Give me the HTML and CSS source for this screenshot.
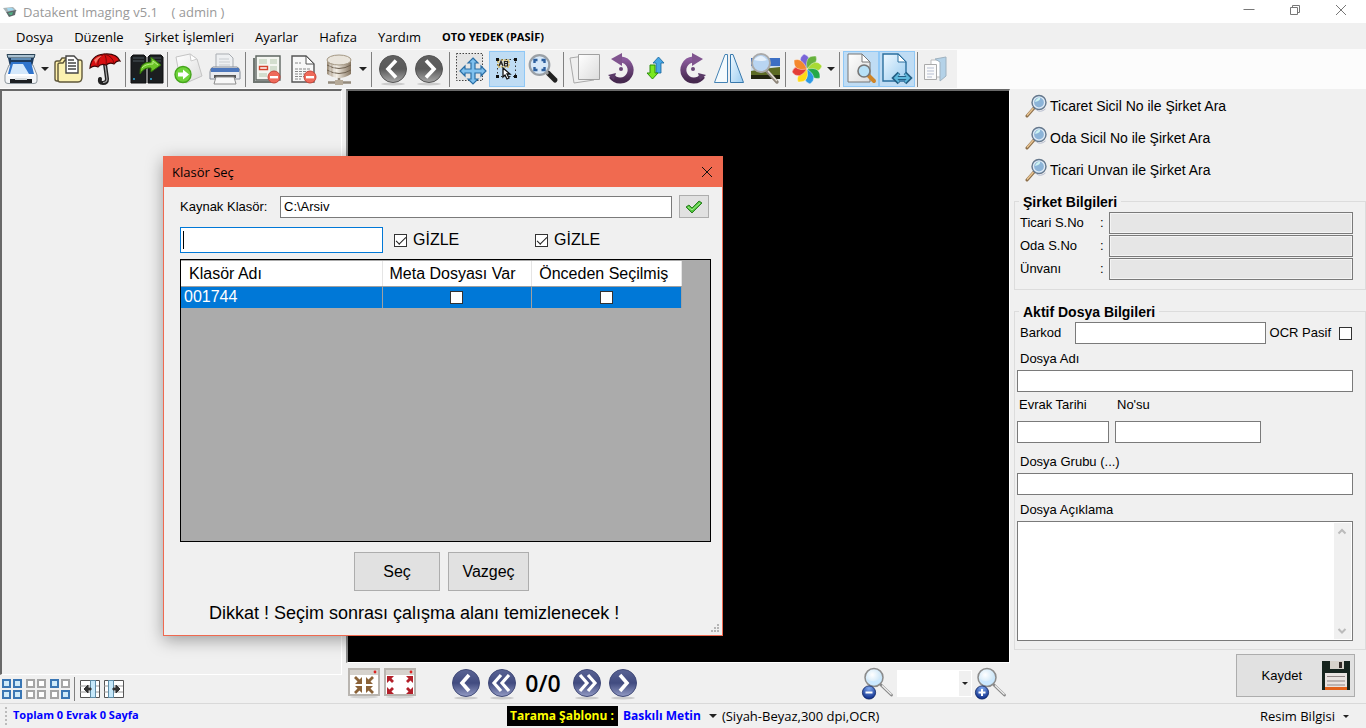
FILE: index.html
```
<!DOCTYPE html>
<html lang="tr">
<head>
  <meta charset="UTF-8" />
  <meta name="viewport" content="width=device-width, initial-scale=1.0"/>
  <title>Datakent Imaging v5.1</title>
  <link rel="stylesheet" href="styles.css">
</head>
<body>
  <!-- shared gradients and symbols -->
  <svg class="defs" width="0" height="0">
    <defs>
      <linearGradient id="gGray" x1="0" y1="0" x2="0" y2="1"><stop offset="0" stop-color="#606060"/><stop offset=".5" stop-color="#5a5a5a"/><stop offset="1" stop-color="#a8a8a8"/></linearGradient>
      <linearGradient id="gNavy" x1="0" y1="0" x2="0" y2="1"><stop offset="0" stop-color="#5a6494"/><stop offset=".5" stop-color="#414b80"/><stop offset="1" stop-color="#939bc4"/></linearGradient>
      <linearGradient id="gPaper" x1="0" y1="0" x2="1" y2="1"><stop offset="0" stop-color="#ffffff"/><stop offset="1" stop-color="#dcdcdc"/></linearGradient>
      <linearGradient id="gBlue" x1="0" y1="0" x2="1" y2="1"><stop offset="0" stop-color="#f0f9ff"/><stop offset="1" stop-color="#9accf0"/></linearGradient>
      <linearGradient id="gPurple" x1="0" y1="0" x2="0" y2="1"><stop offset="0" stop-color="#8a5a9c"/><stop offset="1" stop-color="#46294f"/></linearGradient>
      <linearGradient id="gDb" x1="0" y1="0" x2="1" y2="0"><stop offset="0" stop-color="#9b8c78"/><stop offset=".4" stop-color="#f4efe6"/><stop offset="1" stop-color="#85745f"/></linearGradient>
      <radialGradient id="gLens" cx=".4" cy=".35" r=".7"><stop offset="0" stop-color="#ffffff"/><stop offset="1" stop-color="#b8dcf4"/></radialGradient>
      <radialGradient id="gBall" cx=".5" cy=".2" r=".8"><stop offset="0" stop-color="#7fa8ee"/><stop offset="1" stop-color="#0a2a88"/></radialGradient>
    </defs>
    <symbol id="minus-badge" viewBox="0 0 14 14"><circle cx="7" cy="7" r="6" fill="#ee6a5a" stroke="#c8453a"/><rect x="3" y="6" width="8" height="2.4" fill="#fff"/></symbol>
    <symbol id="search" viewBox="0 0 24 24">
      <path d="M3 22 10 14" stroke="#8d6f4a" stroke-width="3" stroke-linecap="round"/><path d="M3 21.500 9.500 14" stroke="#e9c593" stroke-width="1.400"/>
      <circle cx="15" cy="8.500" r="7" fill="#a9c8e4" stroke="#66788c" stroke-width="1.400"/><circle cx="15" cy="8.500" r="5.500" fill="#8cb4d8" stroke="#e4edf6" stroke-width="1.200"/><path d="M11 8q1-4 5-4.500q1 3-5 4.500" fill="#cdf3f2"/><path d="M21.500 15q-5 4-9 1" stroke="#b9bfd0" fill="none"/>
    </symbol>
    <symbol id="zoom" viewBox="0 0 34 34">
      <path d="M20 19 30.500 29" stroke="#888" stroke-width="2.800" stroke-linecap="round"/><path d="M21 19.500 30.500 28.500" stroke="#eee" stroke-width="1.300"/>
      <circle cx="13" cy="11.500" r="9" fill="url(#gLens)" stroke="#8b8b8b" stroke-width="1.500"/><path d="M5.500 13q7.500 5 15-1q-2 7-7.500 7t-7.500-6" fill="#cbe8ff"/>
      <circle cx="8" cy="26.500" r="6.600" fill="url(#gBall)" stroke="#0a2260" stroke-width=".8"/>
    </symbol>
  </svg>

  <div class="app">
    <header class="titlebar">
      <svg class="app-icon" viewBox="0 0 16 12" width="16" height="12"><path d="M1 2 11 1 15 5 4 6z" fill="#a9b4b6"/><path d="M4 6 14 4 13 9 7 11z" fill="#5d686a"/><path d="M5 2 10 2 12 4 6 5z" fill="#9fd6ee"/><path d="M6 7 11 6 10 9 8 9z" fill="#4fae83"/></svg>
      <span class="app-title">Datakent Imaging v5.1 &nbsp;&nbsp; ( admin )</span>
      <div class="window-buttons">
        <button aria-label="Küçült"><svg viewBox="0 0 12 12"><path d="M0.500 5.500h11" /></svg></button>
        <button aria-label="Geri yükle"><svg viewBox="0 0 12 12"><path d="M1.500 3.500h7v7h-7zM3.500 3.500v-2h7v7h-2"/></svg></button>
        <button aria-label="Kapat"><svg viewBox="0 0 12 12"><path d="M1 1l10 10M11 1 1 11"/></svg></button>
      </div>
    </header>

    <nav class="menubar">
      <button>Dosya</button>
      <button>Düzenle</button>
      <button>Şirket İşlemleri</button>
      <button>Ayarlar</button>
      <button>Hafıza</button>
      <button>Yardım</button>
      <button class="bold">OTO YEDEK (PASİF)</button>
    </nav>

    <div class="toolbar-row">
      <div class="toolbar">
        <button aria-label="Tara"><svg viewBox="0 0 36 36">
          <path d="M4 3.500H32L31 7H5z" fill="#a9c0d0" stroke="#2a4457"/><path d="M5 7H31L29 16H7z" fill="#1c3a5c"/><path d="M8 7H28V9H8z" fill="#5f8cb4"/>
          <path d="M6 14H30L34 24V30Q34 32.500 31 32.500H5Q2 32.500 2 30V24z" fill="#f3f5f7" stroke="#8e979e"/><path d="M8 11H28L31 23H5z" fill="#2f74cc"/><path d="M10 13H20L26 23H7z" fill="#d4e8fb"/><path d="M5 23H31V25H5z" fill="#fff"/><path d="M7 28H29V32H7z" fill="#1c1f22"/><path d="M12 27H24V29H12z" fill="#d8dde0"/></svg></button>
        <button class="arrow" aria-label="Tarama seçenekleri"></button>
        <button aria-label="Dosyalar"><svg viewBox="0 0 36 36">
          <path d="M4 12Q4 10 6 10H9L11 7H19V30H6Q4 30 4 28z" fill="#fff0a8" stroke="#5f573a" stroke-width="1.400"/><path d="M7 13Q7 12 9 12H12L14 9H29Q31 9 31 11V26Q31 31 27 31H9Q7 31 7 29z" fill="#fbf1b0" stroke="#5f573a" stroke-width="1.400"/>
          <path d="M15 5H23L27 9V22H15z" fill="#fff" stroke="#444" stroke-width="1.400"/><path d="M17 9h6M17 12h8M17 15h8M17 18h8" stroke="#444" stroke-width="1.300"/></svg></button>
        <button aria-label="Şemsiye"><svg viewBox="0 0 36 36">
          <path d="M18 13 20 28Q20 32 16 32T13 28" stroke="#222" stroke-width="4" fill="none" stroke-linecap="round"/><path d="M18 13 20 28Q20 31.500 16 31.500" stroke="#aaa" stroke-width="1.200" fill="none"/>
          <path d="M3 17Q4 4 17 3Q30 2 33 10Q30 9 27 13Q23 11 19 14Q14 12 11 16Q7 14 3 17z" fill="#d80f10" stroke="#3c0505" stroke-width="1.200"/><path d="M17 3Q10 7 11 16M17 3Q20 6 19 14M17 3Q26 5 27 13" stroke="#7c0808" fill="none"/><path d="M7 9Q11 5 15 5Q10 8 9 13z" fill="#f57a6a"/></svg></button>
        <span class="sep"></span>
        <button aria-label="Sunucu aktarımı"><svg viewBox="0 0 36 36">
          <path d="M2 6 4 4H15L17 6V32H2zM19 6 21 4H32L34 6V32H19z" fill="#1b1e20" stroke="#0e0f10"/><path d="M4 7h11M4 10h11M21 7h11M21 10h11" stroke="#4d565d"/><path d="M4 28h2M21 28h2" stroke="#3ad" stroke-width="1.500"/>
          <path d="M11 23Q10 11 22 11V6L32 14 22 21V17Q15 16 11 23z" fill="#6dc528" stroke="#2c6a0a"/><path d="M13 17Q16 13 24 13V10L29 14" fill="none" stroke="#b9ed85"/></svg></button>
        <span class="sep"></span>
        <button aria-label="Belge gönder"><svg viewBox="0 0 36 36">
          <path d="M5 6 19 3 26 8 31 25 15 32 9 28z" fill="url(#gPaper)" stroke="#c4c4c4"/><path d="M19 3 20 10 26 8z" fill="#fff" stroke="#ccc"/><circle cx="12" cy="23.500" r="8" fill="#6fd33a" stroke="#45a51c" stroke-width="1.400"/><path d="M7 21.500H12V18.500L18 23.500 12 28.500V25.500H7z" fill="#fff"/></svg></button>
        <button aria-label="Yazdır"><svg viewBox="0 0 36 36">
          <path d="M9 3H22L26 7V18H9z" fill="#eef0f2" stroke="#a9adb2"/><path d="M12 8h10M12 11h11M12 14h11" stroke="#c8ccd0"/><path d="M6 16H30Q33 17 33 21V28H3V21Q3 17 6 16z" fill="#e8eaee" stroke="#868d98"/><path d="M4 17H32V21H4z" fill="#4d77bc"/><path d="M7 24H29V27H7z" fill="#555"/><path d="M9 26H27L29 33H7z" fill="#f8f8f8" stroke="#8c8c8c"/></svg></button>
        <span class="sep"></span>
        <button aria-label="Alan sil"><svg viewBox="0 0 36 36">
          <path d="M5 7V31H27" stroke="#707672" fill="none" stroke-width="2"/><path d="M7 5H31V29H7z" fill="#f4f6f1" stroke="#5e6661" stroke-width="1.400"/><path d="M10 8H18V13H10zM21 8H28V13H21zM21 15H28V26H21zM10 22H18V26H10z" fill="#d3dece"/><path d="M10.500 15.500H18.500V18.500H10.500z" fill="#fff" stroke="#d2432d" stroke-width="1.400"/><use href="#minus-badge" x="18" y="19" width="14" height="14"/></svg></button>
        <button aria-label="Sayfa sil"><svg viewBox="0 0 36 36">
          <path d="M7 5H21L29 13V31H7z" fill="#f7f7f7" stroke="#555" stroke-width="1.400"/><path d="M21 5V13H29z" fill="#fff" stroke="#555"/><path d="M10 12h6M10 18h16M10 20.500h15M10 23h13M10 25.500h9M10 28h6" stroke="#888" stroke-dasharray="3 1"/><use href="#minus-badge" x="18" y="19" width="14" height="14"/></svg></button>
        <button aria-label="Veritabanı"><svg viewBox="0 0 36 36">
          <path d="M18 26V32M7 31.500H30" stroke="#948a7c" stroke-width="2.500"/><path d="M14 29H22V34H14z" fill="#b6aa98"/><path d="M6 9V23Q18 31 30 23V9z" fill="url(#gDb)"/><path d="M6 14Q18 21 30 14M6 19Q18 26 30 19" stroke="#6f6251" fill="none"/><path d="M9 13V25M13 14V27" stroke="#fff" opacity=".5"/><ellipse cx="18" cy="9" rx="12" ry="5" fill="#e9e4db" stroke="#a39783"/></svg></button>
        <button class="arrow" aria-label="Veritabanı seçenekleri"></button>
        <span class="sep"></span>
        <button aria-label="Geri"><svg viewBox="0 0 36 36"><ellipse cx="18" cy="33" rx="12" ry="1.500" fill="#ccc"/><circle cx="18" cy="18" r="13.500" fill="url(#gGray)" stroke="#555"/><path d="M21 9.500 13 18 21 26.500" fill="none" stroke="#fff" stroke-width="3.600"/></svg></button>
        <button aria-label="İleri"><svg viewBox="0 0 36 36"><ellipse cx="18" cy="33" rx="12" ry="1.500" fill="#ccc"/><circle cx="18" cy="18" r="13.500" fill="url(#gGray)" stroke="#555"/><path d="M15 9.500 23 18 15 26.500" fill="none" stroke="#fff" stroke-width="3.600"/></svg></button>
        <span class="sep"></span>
        <button aria-label="Taşı"><svg viewBox="0 0 36 36"><path d="M3.500 2.500H29.500V29.500H3.500z" fill="#e4e4e4" stroke="#444" stroke-dasharray="1.500 1.500"/>
          <path d="M20 7 25 12H22V18H28V15L33 20 28 25V22H22V28H25L20 33 15 28H18V22H12V25L7 20 12 15V18H18V12H15z" fill="#7fc0ee" stroke="#2a6fa6" stroke-width="1.200"/></svg></button>
        <button class="selected" aria-label="Metin seç"><svg viewBox="0 0 36 36"><path d="M8.500 8.500H26.500V25.500H8.500z" fill="none" stroke="#333" stroke-dasharray="1.500 2.500"/><path d="M9 9H20V16H9z" fill="#d8dccd" stroke="#e0b030" stroke-dasharray="2 1"/><path d="M10 15 12 10 14 15M11 13h2M15.500 15V10.500H18.500V15H15.500M15.500 12.500h3" stroke="#222" fill="none" stroke-width="1.200"/><path d="M7 7h3v3H7zM25 7h3v3h-3zM7 24h3v3H7zM25 24h3v3h-3z" fill="#111"/><path d="M14 17V26L16 24 18 28 20 27 18 23H21z" fill="#fff" stroke="#111" stroke-width="1.300"/></svg></button>
        <button aria-label="Sığdır"><svg viewBox="0 0 36 36"><path d="M23 22 30 29" stroke="#222" stroke-width="5" stroke-linecap="round"/><path d="M19 19 23 23" stroke="#999" stroke-width="3"/><circle cx="14.500" cy="14" r="9.800" fill="#d7e8f8" stroke="#9aa0a6" stroke-width="2.200"/><path d="M9.500 12V9H12.500M16.500 9H19.500V12M19.500 16V19H16.500M12.500 19H9.500V16" fill="none" stroke="#2d5f9e" stroke-width="2.400"/></svg></button>
        <span class="sep"></span>
        <button aria-label="Sayfalar"><svg viewBox="0 0 36 36"><path d="M3 7 24 4 27 29 7 32z" fill="#efefef" stroke="#aaa"/><path d="M11.500 3.500H32.500V28.500H11.500z" fill="url(#gPaper)" stroke="#a0a0a0"/></svg></button>
        <button aria-label="Sola döndür"><svg viewBox="0 0 36 36"><path d="M18 8.500A10.500 10.500 0 1 1 8.500 25" fill="none" stroke="url(#gPurple)" stroke-width="6"/><path d="M8 8 19 2V15z" fill="#80548f"/><path d="M5 24 13 22 11 29z" fill="#5b3b68"/><circle cx="18" cy="18" r="2" fill="#6a4678"/></svg></button>
        <button aria-label="Çevir"><svg viewBox="0 0 36 36"><path d="M19.500 6 25 12H22V22H17V12H14z" fill="#46a6e6" stroke="#17649c" stroke-width=".8"/><path d="M11 14H16V22H19L13.500 28 8 22H11z" fill="#7be820" stroke="#2c8f0c"/></svg></button>
        <button aria-label="Sağa döndür"><svg viewBox="0 0 36 36"><path d="M18 8.500A10.500 10.500 0 1 0 27.500 25" fill="none" stroke="url(#gPurple)" stroke-width="6"/><path d="M28 8 17 2V15z" fill="#80548f"/><path d="M31 24 23 22 25 29z" fill="#5b3b68"/><circle cx="18" cy="18" r="2" fill="#6a4678"/></svg></button>
        <button aria-label="Aynala"><svg viewBox="0 0 36 36"><path d="M14 3.500H16.500V31.500H3.500z" fill="#f4fafd" stroke="#4482b4"/><path d="M22 3.500H19.500V31.500H32.500z" fill="url(#gBlue)" stroke="#3878ac"/></svg></button>
        <button aria-label="Resmi incele"><svg viewBox="0 0 36 36"><path d="M4 7H33V28H4z" fill="#3c6fc4"/><path d="M4 15H33V20H4z" fill="#d0e0ee"/><path d="M4 20 14 18 33 16V28H4z" fill="#5d6b24"/><path d="M4 24H33V28H4z" fill="#23240f"/><path d="M20 20 30 31" stroke="#8d857a" stroke-width="3.400" stroke-linecap="round"/><path d="M21 20 30 30" stroke="#e5dfd4" stroke-width="1.400"/><circle cx="14" cy="12" r="9" fill="#b9d5f2" stroke="#aaa" stroke-width="2"/><path d="M7 9Q14 1 20 9 14 11 7 9z" fill="#e6f1fc"/></svg></button>
        <span class="sep"></span>
        <button aria-label="Renkler"><svg viewBox="0 0 36 36">
          <g stroke="#fff" stroke-width=".4"><path d="M18 18Q6 10 15 3Q24 6 18 18" fill="#7a65d8"/><path d="M18 18Q15 4 27 5Q30 13 18 18" fill="#67b23e"/><path d="M18 18Q26 6 33 15Q30 24 18 18" fill="#a8da34"/><path d="M18 18Q32 15 31 27Q23 30 18 18" fill="#24a948"/><path d="M18 18Q30 26 21 33Q12 30 18 18" fill="#2d98e4"/><path d="M18 18Q21 32 9 31Q6 23 18 18" fill="#ffd916"/><path d="M18 18Q10 30 3 21Q6 12 18 18" fill="#e43d36"/><path d="M18 18Q4 21 5 9Q13 6 18 18" fill="#f4882e"/></g></svg></button>
        <button class="arrow" aria-label="Renk seçenekleri"></button>
        <span class="sep"></span>
        <button class="selected" aria-label="Önizleme"><svg viewBox="0 0 36 36"><path d="M5 3H19L27 11V31H5z" fill="url(#gPaper)" stroke="#777"/><path d="M19 3V11H27z" fill="#fff" stroke="#777"/><path d="M26 25 31 30" stroke="#cf8528" stroke-width="4" stroke-linecap="round"/><circle cx="21" cy="20" r="6" fill="#b7e0f6" stroke="#777" stroke-width="1.600"/></svg></button>
        <button class="selected" aria-label="Genişliğe sığdır"><svg viewBox="0 0 36 36"><path d="M4 3H19L27 11V30H4z" fill="url(#gBlue)" stroke="#2b6f9e" stroke-width="1.400"/><path d="M19 3V11H27z" fill="#fff" stroke="#2b6f9e"/><path d="M20 22 15 27 20 32M26 22 31 27 26 32M17 27H29" fill="none" stroke="#245f85" stroke-width="3.800"/><path d="M20 23 16 27 20 31M26 23 30 27 26 31M17 27H29" fill="none" stroke="#5eb8dc" stroke-width="1.800"/></svg></button>
        <span class="sep"></span>
        <button aria-label="Kopyala"><svg viewBox="0 0 36 36"><path d="M10 9H22V26H10z" fill="#fff" stroke="#bbb"/><path d="M14 8 25 6V25L19 30V11z" fill="#b4d2e8" stroke="#9fb2c0"/><path d="M3.500 13.500H15.500V28.500H3.500z" fill="#fafafa" stroke="#aaa"/><path d="M6 17h7M6 20h7M6 23h7M6 26h5" stroke="#b7bfd2"/></svg></button>
      </div>
    </div>

    <main class="workspace">
      <section class="left">
        <div class="thumbs"></div>
        <div class="thumb-tools">
          <button aria-label="Tümünü seç"><svg viewBox="0 0 24 24"><path class="on" d="M3 3h7v7H3zM14 3h7v7h-7zM3 14h7v7H3zM14 14h7v7h-7z"/></svg></button>
          <button aria-label="Seçimi kaldır"><svg viewBox="0 0 24 24"><path class="off" d="M3 3h7v7H3zM14 3h7v7h-7zM3 14h7v7H3zM14 14h7v7h-7z"/></svg></button>
          <button aria-label="Seçimi tersine çevir"><svg viewBox="0 0 24 24"><path class="off" d="M14 3h7v7h-7zM3 14h7v7H3z"/><path class="on" d="M3 3h7v7H3zM14 14h7v7h-7z"/></svg></button>
          <span class="sep"></span>
          <button aria-label="Sola ekle"><svg viewBox="0 0 24 24"><path d="M2.500 3.500h19v17h-19z" fill="#fff" stroke="#555"/><path d="M2 9h19M2 15h19" stroke="#999"/><path d="M12.500 3.500h5v17h-5z" fill="#c6e8fa" stroke="#5f8da8"/><path d="M6 12 10 8V11H13V13H10V16z" fill="#333" stroke="#333"/></svg></button>
          <button aria-label="Sağa ekle"><svg viewBox="0 0 24 24"><path d="M2.500 3.500h19v17h-19z" fill="#fff" stroke="#555"/><path d="M2 9h19M2 15h19" stroke="#999"/><path d="M6.500 3.500h5v17h-5z" fill="#c6e8fa" stroke="#5f8da8"/><path d="M18 12 14 8V11H11V13H14V16z" fill="#333" stroke="#333"/></svg></button>
        </div>
      </section>

      <section class="center">
        <div class="viewer"></div>
        <div class="viewer-tools">
          <button aria-label="Küçült"><svg viewBox="0 0 36 36"><ellipse cx="18" cy="32" rx="14" ry="1.500" fill="#d4d4d4"/><rect x="3" y="4" width="30" height="26" fill="#fff" stroke="#b9b5b0" stroke-width="2"/><path d="M4 5H32V10H4z" fill="#d6d2cd"/><circle cx="29" cy="7" r="1.400" fill="#d22"/><g stroke="#8a6238" stroke-width="2.800" fill="#8a6238"><path d="M9 12 13 16M27 12 23 16M9 28 13 24M27 28 23 24"/><path d="M16 12V19H9zM20 12V19H27zM16 28V21H9zM20 28V21H27z" stroke="none"/></g></svg></button>
          <button aria-label="Büyüt"><svg viewBox="0 0 36 36"><ellipse cx="18" cy="32" rx="14" ry="1.500" fill="#d4d4d4"/><rect x="3" y="4" width="30" height="26" fill="#fff" stroke="#b9b5b0" stroke-width="2"/><path d="M4 5H32V10H4z" fill="#d6d2cd"/><circle cx="29" cy="7" r="1.400" fill="#d22"/><g stroke="#b3202a" stroke-width="2.800" fill="#b3202a"><path d="M7 13 11 17M29 13 25 17M7 27 11 23M29 27 25 23"/><path d="M5 11H12L5 18zM31 11H24L31 18zM5 29H12L5 22zM31 29H24L31 22z" stroke="none"/></g></svg></button>
          <div class="pager">
            <button aria-label="Önceki"><svg viewBox="0 0 36 36"><ellipse cx="18" cy="33" rx="12" ry="1.500" fill="#ccc"/><circle cx="18" cy="18" r="13.500" fill="url(#gNavy)" stroke="#414a78"/><path d="M21 10 14 18 21 26" fill="none" stroke="#fff" stroke-width="3.600"/></svg></button>
            <button aria-label="İlk"><svg viewBox="0 0 36 36"><ellipse cx="18" cy="33" rx="12" ry="1.500" fill="#ccc"/><circle cx="18" cy="18" r="13.500" fill="url(#gNavy)" stroke="#414a78"/><path d="M17 10 10 18 17 26M25 10 18 18 25 26" fill="none" stroke="#fff" stroke-width="3.200"/></svg></button>
            <span class="page-count">0/0</span>
            <button aria-label="Son"><svg viewBox="0 0 36 36"><ellipse cx="18" cy="33" rx="12" ry="1.500" fill="#ccc"/><circle cx="18" cy="18" r="13.500" fill="url(#gNavy)" stroke="#414a78"/><path d="M11 10 18 18 11 26M19 10 26 18 19 26" fill="none" stroke="#fff" stroke-width="3.200"/></svg></button>
            <button aria-label="Sonraki"><svg viewBox="0 0 36 36"><ellipse cx="18" cy="33" rx="12" ry="1.500" fill="#ccc"/><circle cx="18" cy="18" r="13.500" fill="url(#gNavy)" stroke="#414a78"/><path d="M15 10 22 18 15 26" fill="none" stroke="#fff" stroke-width="3.600"/></svg></button>
          </div>
          <div class="zoomer">
            <button aria-label="Uzaklaştır"><svg viewBox="0 0 34 34"><use href="#zoom"/><path d="M4.500 26.500h7" stroke="#fff" stroke-width="2"/></svg></button>
            <div class="combo"><select aria-label="Yakınlık"><option></option></select></div>
            <button aria-label="Yakınlaştır"><svg viewBox="0 0 34 34"><use href="#zoom"/><path d="M4.500 26.500h7M8 23v7" stroke="#fff" stroke-width="2"/></svg></button>
          </div>
        </div>
      </section>

      <aside class="right">
        <div class="searches">
          <button><svg><use href="#search"/></svg>Ticaret Sicil No ile Şirket Ara</button>
          <button><svg><use href="#search"/></svg>Oda Sicil No ile Şirket Ara</button>
          <button><svg><use href="#search"/></svg>Ticari Unvan ile Şirket Ara</button>
        </div>

        <section class="group company">
          <h2>Şirket Bilgileri</h2>
          <div class="company-row"><label for="ticari">Ticari S.No</label><span>:</span><input id="ticari" type="text" readonly></div>
          <div class="company-row"><label for="oda">Oda S.No</label><span>:</span><input id="oda" type="text" readonly></div>
          <div class="company-row"><label for="unvan">Ünvanı</label><span>:</span><input id="unvan" type="text" readonly></div>
        </section>

        <section class="group file">
          <h2>Aktif Dosya Bilgileri</h2>
          <div class="barcode-row">
            <label for="barkod">Barkod</label>
            <input id="barkod" type="text">
            <label for="ocr">OCR Pasif</label>
            <input id="ocr" type="checkbox">
          </div>
          <div class="field">
            <label for="dosyaAdi">Dosya Adı</label>
            <input id="dosyaAdi" type="text">
          </div>
          <div class="date-row">
            <div class="field date"><label for="tarih">Evrak Tarihi</label><input id="tarih" type="text"></div>
            <div class="field number"><label for="no">No'su</label><input id="no" type="text"></div>
          </div>
          <div class="field">
            <label for="grup">Dosya Grubu (...)</label>
            <input id="grup" type="text">
          </div>
          <div class="field grow">
            <label for="aciklama">Dosya Açıklama</label>
            <div class="memo">
              <textarea id="aciklama"></textarea>
              <div class="scroll">
                <svg viewBox="0 0 16 16"><path d="M4.500 10 8 6.500 11.500 10"/></svg>
                <svg viewBox="0 0 16 16"><path d="M4.500 6.500 8 10 11.500 6.500"/></svg>
              </div>
            </div>
          </div>
        </section>

        <button class="save">Kaydet
          <svg viewBox="0 0 28 30"><path d="M0 0H28V29H0z" fill="#16241e"/><path d="M8 0H22V8H8z" fill="#d6d2cb"/><path d="M17 1H20V7H17z" fill="#332b28"/><path d="M3 12H25V29H3z" fill="#e9e3e1"/><path d="M3 26H25V29H3z" fill="#e2621c"/><path d="M5 15.500h18M5 20h18M5 24h18" stroke="#8f8585"/></svg>
        </button>
      </aside>
    </main>

    <footer class="statusbar">
      <div class="totals">Toplam 0 Evrak 0 Sayfa</div>
      <div class="template">
        <span class="template-label">Tarama Şablonu :</span>
        <button class="template-name">Baskılı Metin</button>
        <span>(Siyah-Beyaz,300 dpi,OCR)</span>
      </div>
      <button class="image-info">Resim Bilgisi</button>
    </footer>
  </div>

  <div class="dialog" role="dialog" aria-labelledby="dialogTitle">
    <div class="dialog-title">
      <span id="dialogTitle">Klasör Seç</span>
      <button aria-label="Kapat"><svg viewBox="0 0 12 12"><path d="M1 1l10 10M11 1 1 11"/></svg></button>
    </div>
    <div class="dialog-body">
      <div class="source-row">
        <label for="kaynak">Kaynak Klasör:</label>
        <input id="kaynak" type="text" value="C:\Arsiv">
        <button aria-label="Onayla"><svg viewBox="0 0 18 14"><path d="M1 7 4 5 7 8 14 1 17 3 7 13z" fill="#4fc43c" stroke="#2c7d22"/><path d="M3 7 7 10 15 3" stroke="#a6ee92" fill="none"/></svg></button>
      </div>
      <div class="filter-row">
        <input class="filter" type="text" aria-label="Klasör filtresi">
        <label><input type="checkbox" checked>GİZLE</label>
        <label><input type="checkbox" checked>GİZLE</label>
      </div>
      <div class="grid">
        <table>
          <thead>
            <tr><th class="name">Klasör Adı</th><th>Meta Dosyası Var</th><th>Önceden Seçilmiş</th></tr>
          </thead>
          <tbody>
            <tr><td>001744</td><td><input type="checkbox" aria-label="Meta Dosyası Var"></td><td><input type="checkbox" aria-label="Önceden Seçilmiş"></td></tr>
          </tbody>
        </table>
      </div>
      <div class="dialog-buttons">
        <button class="choose">Seç</button>
        <button>Vazgeç</button>
      </div>
      <p class="warning">Dikkat ! Seçim sonrası çalışma alanı temizlenecek !</p>
    </div>
    <svg class="grip" viewBox="0 0 9 9"><path d="M6 0h2v2H6zM3 3h2v2H3zM6 3h2v2H6zM0 6h2v2H0zM3 6h2v2H3zM6 6h2v2H6z" fill="#b5b5b5"/></svg>
  </div>
</body>
</html>
```
FILE: styles.css
```
* {
  box-sizing: border-box;
}

body {
  margin: 0;
  background: #f0f0f0;
  color: #000;
  font-family: "Liberation Sans", Arial, sans-serif;
  font-size: 13px;
  line-height: 16px;
}

button {
  margin: 0;
  padding: 0;
  border: none;
  background: none;
  color: inherit;
  font: inherit;
}

input, textarea, select {
  margin: 0;
  padding: 0 3px;
  border: 1px solid #7a7a7a;
  border-radius: 0;
  background: #fff;
  font: inherit;
  outline: none;
}

input[type="text"] {
  min-width: 0;
  height: 22px;
}

input[readonly] {
  background: #e6e6e6;
  box-shadow: inset 0 0 0 1px #f4f4f4;
}

input[type="checkbox"] {
  appearance: none;
  flex: none;
  display: block;
  width: 13px;
  height: 13px;
  padding: 0;
  border-color: #333;
}

input[type="checkbox"]:checked::after {
  content: "";
  display: block;
  width: 9px;
  height: 4px;
  margin: 2px 1px;
  border-left: 1px solid #222;
  border-bottom: 1px solid #222;
  transform: rotate(-45deg);
}

svg {
  display: block;
}

.defs {
  position: absolute;
}

.app {
  display: flex;
  flex-direction: column;
  height: 100vh;
  min-height: 700px;
}

/* Title bar and menu */
.titlebar {
  display: flex;
  align-items: center;
  height: 23px;
  padding-left: 2px;
  background: #fff;
  color: #999;
  font-family: "Open Sans", "Noto Sans", sans-serif;
}

.app-title {
  flex: 1;
  margin-left: 5px;
}

.window-buttons {
  display: flex;
  padding: 0 2px 3px 0;
}

.window-buttons button {
  display: flex;
  justify-content: center;
  width: 46px;
}

.window-buttons svg, .dialog-title svg {
  width: 12px;
  height: 12px;
  fill: none;
  stroke: #777;
}

.menubar {
  display: flex;
  align-items: center;
  gap: 21px;
  height: 26px;
  padding: 2px 0 0 16px;
  font-family: "Open Sans", "Noto Sans", sans-serif;
}

.bold {
  font-size: 11px;
  font-weight: bold;
}

/* Main toolbar */
.toolbar-row {
  display: flex;
  height: 40px;
  background: #fcfcfc;
}

.toolbar {
  display: flex;
  align-items: center;
  padding-left: 3px;
  background: #f0f0f0;
  border-top: 1px solid #fcfcfc;
  border-bottom: 1px solid #fcfcfc;
}

.toolbar button {
  width: 36px;
  height: 36px;
}

.toolbar .selected {
  background: #bfdcf4;
  box-shadow: inset 0 0 0 1px #90c8f6;
}

.toolbar .arrow {
  display: flex;
  align-items: center;
  justify-content: center;
  width: 12px;
}

.arrow::after, .combo::after, .template-name::after, .image-info::after {
  content: "";
  border: 4px solid transparent;
  border-top-color: #222;
  border-bottom: none;
}

.sep {
  width: 6px;
  height: 35px;
  border-left: 1px solid transparent;
  background: linear-gradient(#808080, #808080) 1px 0 / 1px 100% no-repeat;
}

/* Work area */
.workspace {
  display: flex;
  flex: 1;
  min-height: 0;
}

.left {
  display: flex;
  flex-direction: column;
  width: 342px;
  margin-right: 4px;
}

.thumbs {
  flex: 1;
  border: 1px solid #fff;
  border-top: 2px solid #696969;
  border-left: 2px solid #696969;
}

.thumb-tools {
  display: flex;
  align-items: center;
  height: 28px;
}

.thumb-tools button {
  width: 24px;
  height: 24px;
}

.thumb-tools .sep {
  height: 24px;
}

.thumb-tools .on, .thumb-tools .off {
  fill: #cfeafa;
  stroke: #3a76b4;
  stroke-width: 2;
}

.thumb-tools .off {
  fill: #fff;
  stroke: #a5a5a5;
}

.center {
  display: flex;
  flex-direction: column;
  flex: 1;
}

.viewer {
  flex: 1;
  background: #000;
  border: 1px solid #fff;
  border-top: 2px solid #696969;
  border-left: 2px solid #8a8a8a;
}

.viewer-tools {
  display: flex;
  align-items: center;
  height: 40px;
}

.viewer-tools button, .viewer-tools svg {
  width: 36px;
  height: 36px;
}

.pager, .zoomer {
  display: flex;
  align-items: center;
}

.pager {
  margin-left: 30px;
}

.page-count {
  width: 49px;
  padding-right: 3px;
  font-family: "Open Sans", "Noto Sans", sans-serif;
  font-size: 23px;
  font-weight: 600;
  line-height: 32px;
  text-align: center;
}

.zoomer {
  margin-left: auto;
}

.zoomer button, .zoomer svg {
  width: 34px;
  height: 34px;
}

.zoomer button {
  margin: 0 2px;
}

.combo {
  display: flex;
  align-items: center;
  width: 75px;
  height: 27px;
  padding-right: 1px;
  border: 1px solid #fff;
}

.combo select {
  appearance: none;
  flex: 1;
  height: 100%;
  border: none;
  margin-right: 1px;
}

.combo::after {
  border-width: 3px;
  border-bottom: none;
  margin: 0 2px;
}

/* Right panel */
.right {
  display: flex;
  flex-direction: column;
  width: 356px;
}

.searches {
  padding-top: 1px;
}

.searches button {
  display: flex;
  align-items: center;
  height: 32px;
  padding-left: 14px;
  gap: 2px;
  font-size: 14px;
}

.searches svg {
  width: 24px;
  height: 24px;
}

.group {
  margin: 15px 0 0 4px;
  padding: 0 12px 8px 2px;
  border: 1px solid #dcdcdc;
}

.group h2 {
  width: max-content;
  height: 16px;
  margin: -8px 0 2px 2px;
  padding: 0 4px;
  background: #f0f0f0;
  font-size: 14px;
}

.company-row {
  display: flex;
  align-items: center;
  margin-bottom: 1px;
  padding-left: 3px;
}

.company-row label {
  width: 80px;
}

.company-row span {
  width: 9px;
}

.company-row input {
  flex: 1;
}

.file {
  display: flex;
  flex-direction: column;
  flex: 1;
  margin-top: 21px;
}

.barcode-row {
  display: flex;
  align-items: center;
  gap: 4px;
  padding-left: 3px;
}

.barcode-row label:first-child {
  width: 51px;
}

.barcode-row input[type="text"] {
  flex: 1;
}

#ocr {
  margin: 0 1px 0 4px;
}

.field {
  display: flex;
  flex-direction: column;
  margin-top: 7px;
}

.field label {
  padding-left: 3px;
  margin-bottom: 3px;
}

.date-row {
  display: flex;
  gap: 6px;
  margin-bottom: 4px;
}

.date-row label {
  padding-left: 2px;
  margin: -2px 0 8px;
}

.date {
  width: 92px;
}

.number {
  width: 146px;
}

.grow {
  flex: 1;
}

.memo {
  display: flex;
  flex: 1;
  border: 1px solid #7a7a7a;
  padding: 1px;
  background: #fff;
}

.memo textarea {
  flex: 1;
  border: none;
  resize: none;
}

.scroll {
  display: flex;
  flex-direction: column;
  justify-content: space-between;
  width: 17px;
  background: #f0f0f0;
}

.scroll svg {
  width: 16px;
  height: 17px;
  fill: none;
  stroke: #bbb;
  stroke-width: 2;
}

.save {
  display: flex;
  align-items: center;
  justify-content: flex-end;
  gap: 20px;
  align-self: flex-end;
  width: 119px;
  height: 43px;
  margin: 4px 11px 6px 0;
  padding-right: 4px;
  border: 1px solid #adadad;
  background: #e1e1e1;
}

.save svg {
  width: 28px;
  height: 30px;
}

/* Status bar */
.statusbar {
  display: flex;
  align-items: center;
  height: 25px;
  border-top: 1px solid #d9d9d9;
  font-family: "Open Sans", "Noto Sans", sans-serif;
}

.totals {
  width: 507px;
  padding-left: 8px;
  color: #0000ff;
  font-size: 11px;
  font-weight: bold;
}

.totals::before {
  content: "";
  display: inline-block;
  width: 2px;
  height: 18px;
  margin: 0 6px 0 -3px;
  vertical-align: middle;
  background: repeating-linear-gradient(#bbb 0 2px, transparent 2px 4px);
}

.template {
  display: flex;
  align-items: center;
  gap: 5px;
}

.template-label {
  padding: 2px 4px 2px 3px;
  background: #000;
  color: #ffff00;
  font-size: 12px;
  font-weight: bold;
}

.template-name, .image-info {
  display: flex;
  align-items: center;
  gap: 8px;
}

.template-name {
  color: #0000ff;
  font-size: 12px;
  font-weight: bold;
}

.image-info {
  margin-left: auto;
  margin-right: 17px;
}

.image-info::after {
  border-width: 3px;
  border-bottom: none;
}

/* Folder dialog */
.dialog {
  position: absolute;
  top: 156px;
  left: 163px;
  width: 560px;
  border: 1px solid #ef6950;
  background: #f0f0f0;
  box-shadow: 0 4px 16px rgba(0,0,0,0.35);
}

.dialog-title {
  display: flex;
  align-items: center;
  justify-content: space-between;
  height: 30px;
  padding: 0 9px 0 8px;
  background: #f06a50;
  font-family: "Open Sans", "Noto Sans", sans-serif;
}

.dialog-title svg {
  stroke: #111;
}

.dialog-body {
  padding: 8px 11px 12px 16px;
}

.source-row {
  display: flex;
  align-items: center;
  gap: 7px;
  margin-right: 2px;
}

.source-row label {
  width: 93px;
}

.source-row input {
  flex: 1;
}

.source-row button {
  display: flex;
  align-items: center;
  justify-content: center;
  width: 30px;
  height: 23px;
  border: 1px solid #adadad;
  background: #e1e1e1;
}

.source-row svg {
  width: 18px;
  height: 14px;
}

.filter-row {
  display: flex;
  align-items: center;
  margin-top: 9px;
  font-size: 16px;
}

.filter-row .filter {
  width: 203px;
  height: 26px;
  margin-right: 11px;
  border-color: #0078d7;
  background: linear-gradient(#000, #000) 2px 3px / 1px 18px no-repeat #fff;
}

.filter-row label {
  display: flex;
  align-items: center;
  gap: 6px;
  width: 141px;
}

.grid {
  height: 283px;
  margin-top: 6px;
  border: 1px solid #000;
  background: #ababab;
  font-size: 16px;
}

.grid table {
  width: 501px;
  margin-top: 1px;
  border-collapse: collapse;
  table-layout: fixed;
}

.grid th, .grid td {
  height: 22px;
  padding: 0 3px;
  border-right: 1px solid #a0a0a0;
}

.grid th {
  height: 25px;
  padding: 1px 7px 0;
  border-right-color: #e5e5e5;
  border-bottom: 1px solid #a0a0a0;
  background: #fff;
  font-weight: normal;
  text-align: left;
  white-space: nowrap;
}

.grid .name {
  width: 201px;
  padding-left: 8px;
}

.grid td {
  background: #0078d7;
  color: #fff;
}

.grid td input {
  margin: 0 auto;
}

.dialog-buttons {
  display: flex;
  justify-content: center;
  gap: 8px;
  margin-top: 10px;
  padding-right: 8px;
}

.dialog-buttons button {
  width: 81px;
  height: 39px;
  border: 1px solid #adadad;
  background: #e1e1e1;
  font-size: 16px;
}

.dialog-buttons .choose {
  width: 86px;
}

.warning {
  margin: 12px 0 0 29px;
  font-size: 18px;
  line-height: 20px;
}

.grip {
  position: absolute;
  right: 2px;
  bottom: 2px;
  width: 9px;
  height: 9px;
}
```
